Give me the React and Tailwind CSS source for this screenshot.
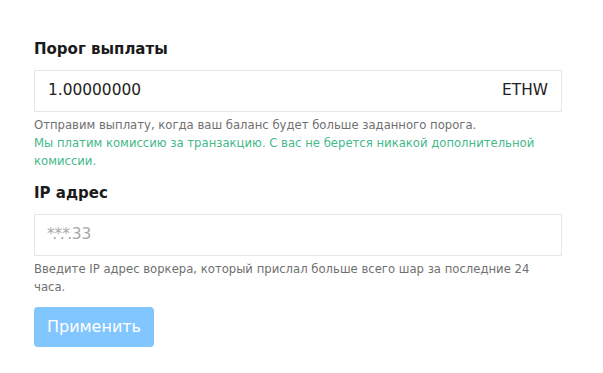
export default function App() {
  const font = { fontFamily: '"DejaVu Sans", "Noto Sans", sans-serif' };
  return (
    <div className="w-[603px] h-[373px] bg-white px-[34px] pt-[37px]" style={font}>
      <div className="w-[528px] flex flex-col">
        <div className="text-[15px] leading-[24px] font-semibold text-[#1b1b1b]">Порог выплаты</div>
        <div className="mt-[9px] h-[42px] border border-[#e6e6e6] flex items-center justify-between px-[13px] text-[15.4px] text-[#222]">
          <span>1.00000000</span>
          <span>ETHW</span>
        </div>
        <div className="mt-[4px] text-[11.65px] leading-[18px]">
          <div className="text-[#707070]">Отправим выплату, когда ваш баланс будет больше заданного порога.</div>
          <div className="text-[#45b98a]">Мы платим комиссию за транзакцию. С вас не берется никакой дополнительной комиссии.</div>
        </div>
        <div className="mt-[11px] text-[15px] leading-[24px] font-semibold text-[#1b1b1b]">IP адрес</div>
        <div className="mt-[9px] h-[42px] border border-[#e6e6e6] flex items-center px-[12px] text-[15.4px] text-[#a8a8a8]">
          <span className="tracking-[-2.5px]">*.*.*.</span>
          <span className="ml-[2px]">33</span>
        </div>
        <div className="mt-[4px] text-[11.65px] leading-[18px] text-[#707070]">
          Введите IP адрес воркера, который прислал больше всего шар за последние 24 часа.
        </div>
        <button className="mt-[11px] w-[120px] h-[40px] rounded-[4px] bg-[#82c6ff] text-white text-[16px]">Применить</button>
      </div>
    </div>
  );
}
